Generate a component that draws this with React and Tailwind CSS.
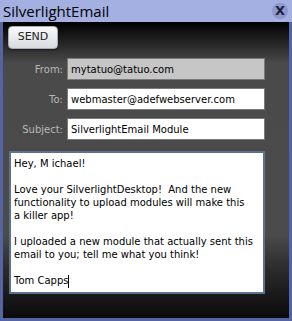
import React from 'react';

const bodyFont = { fontFamily: '"DejaVu Sans", Verdana, sans-serif' };

const messageLines = [
  'Hey, M ichael!',
  '',
  'Love your SilverlightDesktop!\u00a0 And the new',
  'functionality to upload modules will make this',
  'a killer app!',
  '',
  'I uploaded a new module that actually sent this',
  'email to you; tell me what you think!',
  '',
];

const Field = ({ label, value, readOnly }) => (
  <div className="flex items-center h-[22px] mb-2">
    <label className="w-[64px] pr-[4px] text-right text-[10px] text-[#b8b8b8]" style={bodyFont}>{label}</label>
    <div
      className={`flex-1 h-[22px] mr-[24px] flex items-center px-[3px] text-[10px] text-black border border-[#7a7a7a] ${
        readOnly ? 'bg-[#c6c6c6]' : 'bg-white'
      }`}
      style={bodyFont}
    >
      {value}
    </div>
  </div>
);

const App = () => {
  return (
    <div className="w-[292px] h-[321px] bg-[#5565a3] px-[3px] pb-[3px] flex flex-col overflow-hidden">
      <div className="h-[22px] -mx-[3px] px-[3px] bg-[#a4afe2] flex items-center justify-between">
        <span className="text-[15px] leading-none text-black" style={{ fontFamily: '"Open Sans", "DejaVu Sans", sans-serif' }}>
          SilverlightEmail
        </span>
        <span className="w-[16px] h-[16px] mr-[1px] rounded-full bg-[#8d98cc] flex items-center justify-center text-[13px] font-bold text-[#1a1f3a]" style={bodyFont}>
          X
        </span>
      </div>
      <div className="flex-1 flex flex-col bg-[linear-gradient(to_bottom,#000_0%,#4a4a4a_14%,#4b4b4b_72%,#2a2a2a_84%,#0a0a0a_100%)]">
        <div className="flex pt-[4px] pl-[5px] pb-[9px]">
          <button
            className="w-[50px] h-[23px] rounded-[4px] bg-[linear-gradient(to_bottom,#fafafa,#d8dbe0)] border border-[#aab] text-[11px] text-[#222] shadow-[0_1px_2px_rgba(0,0,0,0.5)]"
            style={bodyFont}
          >
            SEND
          </button>
        </div>
        <Field label="From:" value="mytatuo@tatuo.com" readOnly />
        <Field label="To:" value="webmaster@adefwebserver.com" />
        <Field label="Subject:" value="SilverlightEmail Module" />
        <div className="ml-[6px] mr-[24px] mt-[3px] h-[143px] overflow-hidden bg-white border-2 border-[#5b7390] pl-[3px] pt-[4px] text-[10px] leading-[13px] text-black" style={bodyFont}>
          {messageLines.map((line, i) => (
            <div key={i} className="h-[13px] whitespace-nowrap">{line}</div>
          ))}
          <div className="h-[13px] whitespace-nowrap">
            Tom Capps<span className="inline-block w-px h-[13px] bg-black align-middle" />
          </div>
        </div>
      </div>
    </div>
  );
};

export default App;
